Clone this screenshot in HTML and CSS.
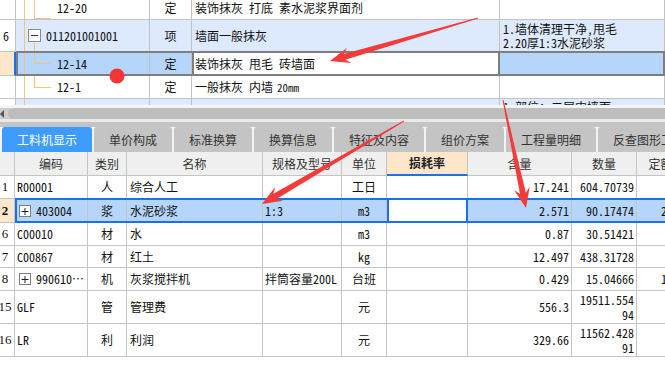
FILE: index.html
```html
<!DOCTYPE html>
<html lang="zh-CN">
<head>
<meta charset="utf-8">
<title>工料机显示</title>
<link rel="stylesheet" href="styles.css">
</head>
<body>
<div class="app">
  <section class="top">
    <div class="top-inner">
      <div class="trow r23">
        <div class="tn"></div>
        <div class="tc tree"><i class="gl"></i><i class="lk lk-a"></i><span class="leaf">12-20</span></div>
        <div class="tc ty">定</div>
        <div class="tc nm">装饰抹灰 打底 素水泥浆界面剂</div>
        <div class="tc ds"></div>
      </div>
      <div class="trow r32 lb">
        <div class="tn">6</div>
        <div class="tc tree"><i class="gl"></i><i class="cl"></i><span class="node"><svg class="box" width="13" height="13" viewBox="0 0 13 13"><rect x=".5" y=".5" width="12" height="12" fill="#fff" stroke="#8a8a8a"/><path d="M3 6.5h7" stroke="#333"/></svg>011201001001</span></div>
        <div class="tc ty">项</div>
        <div class="tc nm">墙面一般抹灰</div>
        <div class="tc ds two">1.墙体清理干净,甩毛<br>2.20厚1:3水泥砂浆</div>
      </div>
      <div class="trow r24 sel">
        <div class="tn"></div>
        <div class="tc tree"><i class="gl"></i><i class="lk"></i><span class="leaf">12-14</span></div>
        <div class="tc ty">定</div>
        <div class="tc nm edit">装饰抹灰 甩毛 砖墙面</div>
        <div class="tc ds"></div>
      </div>
      <div class="trow r23">
        <div class="tn"></div>
        <div class="tc tree"><i class="gl"></i><i class="lk"></i><span class="leaf">12-1</span></div>
        <div class="tc ty">定</div>
        <div class="tc nm">一般抹灰 内墙 <span class="sm">20mm</span></div>
        <div class="tc ds"></div>
      </div>
      <div class="trow r23 lb">
        <div class="tn"></div>
        <div class="tc tree"><i class="gl"></i></div>
        <div class="tc ty"></div>
        <div class="tc nm"></div>
        <div class="tc ds cut">1.部位：二层内墙面</div>
      </div>
    </div>
  </section>

  <div class="hscroll"><span class="larr"></span><span class="thumb"></span></div>

  <nav class="tabstrip">
    <div class="tabs">
      <div class="tab on">工料机显示</div>
      <div class="tab">单价构成</div>
      <div class="tab">标准换算</div>
      <div class="tab">换算信息</div>
      <div class="tab">特征及内容</div>
      <div class="tab">组价方案</div>
      <div class="tab">工程量明细</div>
      <div class="tab">反查图形工程量</div>
    </div>
  </nav>

  <section class="grid">
    <div class="brow hd">
      <div class="bn"></div><div>编码</div><div>类别</div><div>名称</div><div>规格及型号</div><div>单位</div><div class="loss">损耗率</div><div>含量</div><div>数量</div><div>定额价</div>
    </div>
    <div class="brow r23">
      <div class="bn">1</div><div class="cd">R00001</div><div class="ct">人</div><div class="nmc">综合人工</div><div></div><div class="ct">工日</div><div></div><div class="num">17.241</div><div class="num">604.70739</div><div></div>
    </div>
    <div class="brow r24 bsel">
      <div class="bn">2</div><div class="cd"><svg class="plus" width="12" height="12" viewBox="0 0 12 12"><rect x=".5" y=".5" width="11" height="11" fill="#fff" stroke="#7d7d7d"/><path d="M2.5 6.5h7M6 3v7" stroke="#222"/></svg>403004</div><div class="ct">浆</div><div class="nmc">水泥砂浆</div><div>1:3</div><div class="ct">m3</div><div class="ed"></div><div class="num">2.571</div><div class="num">90.17474</div><div class="lc">2.571</div>
    </div>
    <div class="brow r23">
      <div class="bn">6</div><div class="cd">C00010</div><div class="ct">材</div><div class="nmc">水</div><div></div><div class="ct">m3</div><div></div><div class="num">0.87</div><div class="num">30.51421</div><div></div>
    </div>
    <div class="brow r22">
      <div class="bn">7</div><div class="cd">C00867</div><div class="ct">材</div><div class="nmc">红土</div><div></div><div class="ct">kg</div><div></div><div class="num">12.497</div><div class="num">438.31728</div><div></div>
    </div>
    <div class="brow r23">
      <div class="bn">8</div><div class="cd"><svg class="plus" width="12" height="12" viewBox="0 0 12 12"><rect x=".5" y=".5" width="11" height="11" fill="#fff" stroke="#7d7d7d"/><path d="M2.5 6.5h7M6 3v7" stroke="#222"/></svg>990610⋯</div><div class="ct">机</div><div class="nmc">灰浆搅拌机</div><div>拌筒容量200L</div><div class="ct">台班</div><div></div><div class="num">0.429</div><div class="num">15.04666</div><div class="lc">1.000</div>
    </div>
    <div class="brow r33">
      <div class="bn">15</div><div class="cd">GLF</div><div class="ct">管</div><div class="nmc">管理费</div><div></div><div class="ct">元</div><div></div><div class="num">556.3</div><div class="num wrap">19511.554<br>94</div><div></div>
    </div>
    <div class="brow r33">
      <div class="bn">16</div><div class="cd">LR</div><div class="ct">利</div><div class="nmc">利润</div><div></div><div class="ct">元</div><div></div><div class="num">329.66</div><div class="num wrap">11562.428<br>91</div><div></div>
    </div>
  </section>

  <svg class="annot" width="665" height="387" viewBox="0 0 665 387">
    <polygon fill="#f53a3a" points="477.9,17.5 343.6,53.9 347,47.7 330,61 351.4,63.1 345.3,59.7 478.1,18.5"/>
    <polygon fill="#f53a3a" points="403.8,120.6 273.4,193.8 275.2,187 262,204 283.3,200.8 276.5,199 404.2,121.4"/>
    <polygon fill="#f53a3a" points="502.5,100.1 520,194 514,190.1 526,208 529.7,186.8 525.8,192.7 503.5,99.9"/>
    <circle cx="117" cy="76" r="7.5" fill="#f53535"/>
  </svg>
</div>
</body>
</html>
```

FILE: styles.css
```css
* { box-sizing: border-box; margin: 0; padding: 0; }
html, body { width: 665px; height: 387px; overflow: hidden; background: #fff; }
body {
  font-family: "Noto Sans Mono CJK SC", "Noto Sans CJK SC", monospace;
  font-size: 12px;
  color: #111;
}
.app { position: relative; width: 665px; height: 387px; overflow: hidden; }

/* ---------- top tree table ---------- */
.top { height: 105px; overflow: hidden; }
.top-inner { margin-top: -3px; }
.trow {
  display: grid;
  grid-template-columns: 16px 134px 42px 308px 165px;
  position: relative;
}
.trow.r23 { height: 23px; }
.trow.r24 { height: 24px; }
.trow.r32 { height: 32px; }
.trow > div {
  border-right: 1px solid #c2c2c2;
  border-bottom: 1px solid #c2c2c2;
  display: flex;
  align-items: center;
  white-space: nowrap;
  overflow: hidden;
  line-height: 14px;
}
.trow .tn { justify-content: flex-start; padding-left: 3px; background: #fff; }
.trow.lb .tc { background: #dde9fc; }
.tree { position: relative; }
.gl { position: absolute; left: 8px; top: 0; bottom: 0; width: 1px; background: #f6c27c; }
.cl { position: absolute; left: 18px; top: 23px; bottom: 0; width: 1px; background: #f6c27c; }
.lk {
  position: absolute; left: 18px; top: 0; height: 12px; width: 17px;
  border-left: 1px solid #f6c27c; border-bottom: 1px solid #f6c27c;
}
.lk-a { height: 22px; }
.leaf { padding-left: 41px; }
.node { display: flex; align-items: center; gap: 5px; padding-left: 12px; position: relative; }
.box { display: block; }
.ty { justify-content: center; }
.nm { padding-left: 3px; }
.ds { padding-left: 3px; }
.ds.two { align-items: center; }
.ds.cut { align-items: flex-start; padding-top: 1px; }
.sm { font-size: 11px; margin-left: 4px; }

.trow.sel .tn { background: #fde6c9; border-right: 2px solid #1a6fe6; }
.trow.sel .tc { background: #b5d5fb; }
.trow.sel .nm.edit { background: #fff; border-left: 2px solid #7e7e7e; border-right: 2px solid #7e7e7e; padding-left: 1px; }
.trow.sel::after {
  content: ""; position: absolute; left: 16px; right: 0; top: -1px; bottom: 0;
  border: 2px solid #7e7e7e; pointer-events: none;
}

/* ---------- scrollbar ---------- */
.hscroll {
  height: 14px;
  border-top: 3px solid #f5f5f5;
  background: #cdcdcd;
  display: flex;
  align-items: center;
}
.larr {
  width: 0; height: 0; margin-left: 0;
  border-top: 4px solid transparent; border-bottom: 4px solid transparent;
  border-right: 4px solid #555;
}
.thumb { flex: 1; height: 11px; margin-left: 4px; background: #bdbdbd; border-radius: 6px 0 0 6px; }

/* ---------- tabs ---------- */
.tabstrip { border-top: 3px solid #e9e9e9; }
.tabs {
  display: flex;
  gap: 2px;
  padding-left: 2px;
  height: 30px;
  border-top: 5px solid #c4c4c4;
  background: #f3f3f3;
  overflow: hidden;
}
.tab {
  flex: none;
  height: 25px;
  line-height: 25px;
  padding: 0 15px;
  background: #c4c4c4;
  border-radius: 3px 3px 0 0;
  font-family: "Noto Sans CJK SC", sans-serif;
  font-size: 12px;
  color: #333;
  white-space: nowrap;
}
.tab.on { background: #3e9cff; color: #fff; }

/* ---------- bottom grid ---------- */
.grid { width: 665px; overflow: hidden; }
.brow {
  display: grid;
  grid-template-columns: 15px 73px 39px 136px 79px 45px 81px 104px 65px 60px;
  position: relative;
  width: 697px;
}
.brow.r22 { height: 22px; }
.brow.r23 { height: 23px; }
.brow.r24 { height: 24px; }
.brow.r33 { height: 33px; }
.brow > div {
  border-right: 1px solid #c4c4c4;
  border-bottom: 1px solid #c4c4c4;
  display: flex;
  align-items: center;
  white-space: nowrap;
  overflow: hidden;
  padding: 0 2px;
  line-height: 14px;
}
.brow.hd { height: 24px; }
.brow.hd > div {
  background: #efefef;
  justify-content: center;
  font-family: "Noto Sans CJK SC", sans-serif;
  color: #333;
}
.brow.hd .loss {
  background: #fde6c9;
  font-weight: bold;
  color: #222;
  border-bottom: 2px solid #1a72ea;
}
.brow .bn {
  justify-content: center;
  padding: 0 4px 0 0;
  font-family: "Liberation Serif", "Noto Sans CJK SC", serif;
  font-size: 13px;
  overflow: visible;
}
.brow .ct { justify-content: center; }
.brow .cd { gap: 5px; }
.brow .cd .plus { margin-left: 2px; flex: none; display: block; }
.brow .nmc { padding-left: 3px; }
.brow .num { justify-content: flex-end; text-align: right; padding-right: 2px; }
.brow .num.wrap { line-height: 15px; }
.brow .lc { padding-left: 24px; }

.brow.bsel > div { background: #b5d5fb; }
.brow.bsel .bn { background: #fde6c9; font-weight: bold; }
.brow.bsel .ed { background: #fff; border: 2px solid #1a72ea; border-top: 0; border-bottom: 0; }
.brow.bsel::after {
  content: ""; position: absolute; left: 15px; right: 0; top: -1px; bottom: 0;
  border: 2px solid #1a72ea; pointer-events: none;
}

/* ---------- annotations ---------- */
.annot { position: absolute; left: 0; top: 0; pointer-events: none; }
```
